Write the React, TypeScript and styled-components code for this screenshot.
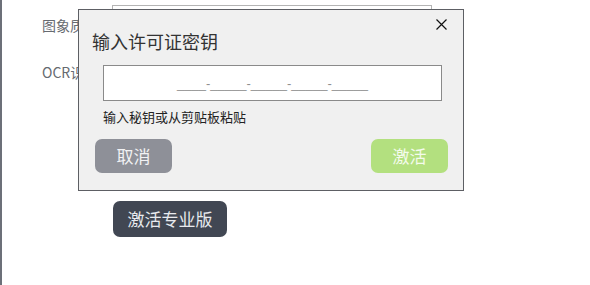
import styled, { createGlobalStyle } from "styled-components";

const GlobalStyle = createGlobalStyle`
  html, body {
    margin: 0;
    padding: 0;
    background: #ffffff;
  }
  body {
    font-family: "Noto Sans CJK SC", "Liberation Sans", sans-serif;
  }
`;

const Page = styled.div`
  position: relative;
  height: 285px;
  border-left: 2px solid #6c7079;
  box-sizing: border-box;
  overflow: hidden;
`;

const Settings = styled.div`
  display: flex;
  flex-direction: column;
  padding: 5px 0 0 40px;
`;

const Row = styled.div<{ $height: number }>`
  display: flex;
  align-items: center;
  height: ${(p) => p.$height}px;
`;

const Label = styled.span`
  width: 70px;
  font-size: 14px;
  line-height: 20px;
  color: #666a70;
  white-space: nowrap;
  overflow: hidden;
`;

const Field = styled.div`
  width: 320px;
  height: 40px;
  box-sizing: border-box;
  border: 1px solid #b4b4b4;
  background: #fff;
`;

const ProButton = styled.button`
  margin: 102px 0 0 71px;
  align-self: flex-start;
  width: 114px;
  height: 36px;
  border: none;
  border-radius: 7px;
  background: #414753;
  color: #e8eaee;
  font-family: inherit;
  font-size: 17px;
  line-height: 36px;
  padding: 0;
  cursor: pointer;
`;

const Dialog = styled.div`
  position: absolute;
  left: 76px;
  top: 9px;
  width: 386px;
  height: 182px;
  box-sizing: border-box;
  border: 1px solid #5d5f64;
  background: #f0f0f0;
  display: flex;
  flex-direction: column;
  padding: 0 15px 0 16px;
`;

const DialogHeader = styled.div`
  display: flex;
  justify-content: space-between;
  align-items: flex-start;
  height: 55px;
`;

const Title = styled.h2`
  margin: 20px 0 0 -3px;
  font-size: 18px;
  font-weight: 400;
  line-height: 22px;
  color: #333;
`;

const CloseButton = styled.button`
  margin: 7px 0 0 0;
  width: 14px;
  height: 14px;
  padding: 0;
  border: none;
  background: transparent;
  display: flex;
  align-items: center;
  justify-content: center;
  cursor: pointer;
`;

const KeyInput = styled.input`
  margin: 0 6px 0 8px;
  height: 36px;
  box-sizing: border-box;
  border: 1px solid #8a8a8a;
  background: #fff;
  outline: none;
  text-align: center;
  font-family: "Liberation Sans", sans-serif;
  font-size: 13px;
  color: #333;
  &::placeholder {
    color: #8f8f8f;
  }
`;

const Hint = styled.p`
  margin: 7px 0 0 8px;
  font-size: 13px;
  line-height: 18px;
  color: #222;
`;

const Actions = styled.div`
  display: flex;
  justify-content: space-between;
  margin-top: 13px;
`;

const ActionButton = styled.button<{ $tone: "muted" | "go" }>`
  width: 77px;
  height: 34px;
  border: none;
  border-radius: 7px;
  padding: 0;
  background: ${(p) => (p.$tone === "go" ? "#b3e07f" : "#8e9098")};
  color: ${(p) => (p.$tone === "go" ? "#f4fbec" : "#f2f2f4")};
  font-family: inherit;
  font-size: 17px;
  line-height: 34px;
  cursor: pointer;
`;

export default function App() {
  return (
    <>
      <GlobalStyle />
      <Page>
        <Settings>
          <Row $height={40}>
            <Label>图象质量</Label>
            <Field />
          </Row>
          <Row $height={54}>
            <Label>OCR识别</Label>
          </Row>
          <ProButton>激活专业版</ProButton>
        </Settings>

        <Dialog>
          <DialogHeader>
            <Title>输入许可证密钥</Title>
            <CloseButton aria-label="关闭">
              <svg width="11" height="11" viewBox="0 0 11 11">
                <path d="M0.5 0.5 L10.5 10.5 M10.5 0.5 L0.5 10.5" stroke="#111" strokeWidth="1.2" />
              </svg>
            </CloseButton>
          </DialogHeader>
          <KeyInput placeholder="____-_____-_____-_____-_____" />
          <Hint>输入秘钥或从剪贴板粘贴</Hint>
          <Actions>
            <ActionButton $tone="muted">取消</ActionButton>
            <ActionButton $tone="go">激活</ActionButton>
          </Actions>
        </Dialog>
      </Page>
    </>
  );
}
